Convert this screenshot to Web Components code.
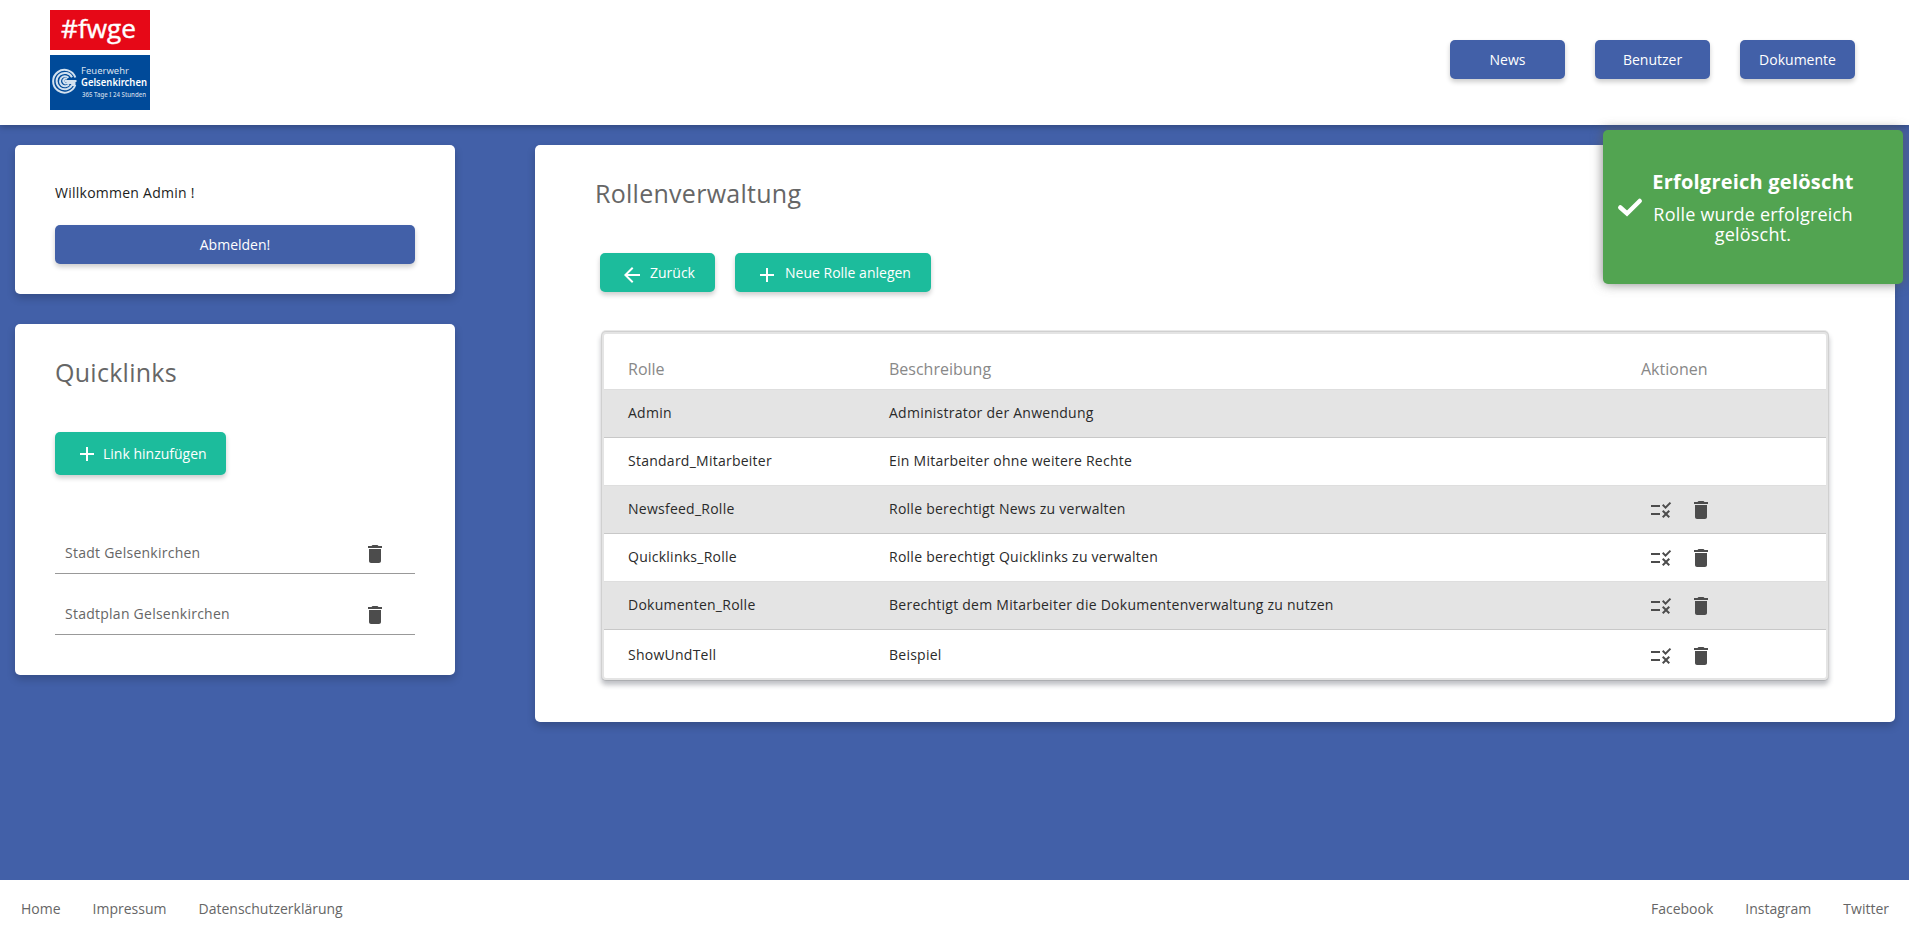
<!DOCTYPE html>
<html lang="de">
<head>
<meta charset="utf-8">
<title>Rollenverwaltung</title>
<style>
html,body{margin:0;height:100%}
body{font-family:"Open Sans",sans-serif;font-size:14px;background:#4260a8;color:#666}
</style>
</head>
<body>
<fw-app></fw-app>
<script>
const define = (name, html) => {
  const t = document.createElement('template');
  t.innerHTML = html;
  customElements.define(name, class extends HTMLElement {
    constructor() {
      super();
      this.attachShadow({ mode: 'open' }).append(t.content.cloneNode(true));
    }
  });
};

const ICONS = {
  plus: 'M19 13h-6v6h-2v-6H5v-2h6V5h2v6h6v2z',
  back: 'M20 11H7.830l5.590-5.590L12 4l-8 8 8 8 1.410-1.410L7.830 13H20v-2z',
  trash: 'M6 19c0 1.100.9 2 2 2h8c1.100 0 2-.9 2-2V7H6v12zM19 4h-3.500l-1-1h-5l-1 1H5v2h14V4z',
  rule: 'M16.540 11L13 7.460l1.410-1.410 2.120 2.120 4.240-4.240 1.410 1.410L16.540 11zM11 7H2v2h9V7zM21 13.410L19.590 12 17 14.590 14.410 12 13 13.410 15.590 16 13 18.590 14.410 20 17 17.410 19.590 20 21 18.590 18.410 16 21 13.410zM11 15H2v2h9v-2z'
};
customElements.define('fw-icon', class extends HTMLElement {
  connectedCallback() {
    if (this.shadowRoot) return;
    this.attachShadow({ mode: 'open' }).innerHTML =
      `<style>:host{display:block;flex:none;width:var(--size,24px);height:var(--size,24px)}svg{display:block;width:100%;height:100%}</style>
       <svg viewBox="0 0 24 24" fill="currentColor"><path d="${ICONS[this.getAttribute('name')]}"/></svg>`;
  }
});

define('fw-button', `<style>
:host{display:flex;box-sizing:border-box;height:39px;min-width:115px;align-items:center;justify-content:center;padding:0 20px;border-radius:5px;background:#4260a8;color:#fff;font-size:14px;font-weight:500;letter-spacing:var(--ls,0);box-shadow:0 3px 5px rgba(0,0,0,.2);white-space:nowrap}
:host([nav]){padding:0}
:host([green]){background:#1cbc9c}
</style><slot></slot>`);

define('fw-card', `<style>
:host{display:block;box-sizing:border-box;background:#fff;border-radius:5px;box-shadow:0 4px 8px rgba(0,0,0,.2)}
</style><slot></slot>`);

define('fw-logo', `<style>
:host{display:block;width:100px;height:100px}svg{display:block;overflow:visible}
text{font-family:"Open Sans",sans-serif;fill:#fff}
.s text{font-family:"Noto Sans",sans-serif}
</style>
<svg width="100" height="100" viewBox="0 0 100 100">
<rect width="100" height="40" fill="#e60817"/>
<text x="11" y="28" font-size="25" textLength="75" lengthAdjust="spacingAndGlyphs" stroke="#fff" stroke-width=".4">#fwge</text>
<rect y="45" width="100" height="55" fill="#004a99"/>
<g fill="none" stroke="#d3e1ef" stroke-width="2">
<path d="M25.300 67.500A11.400 11.400 0 1 0 25.300 75"/>
<path d="M22 67.200A8.200 8.200 0 1 0 22 75H25.500"/>
<path d="M18.500 67.700A5 5 0 1 0 19 74.300M26.500 70.900H14.500"/>
<path d="M17 68.900A2.400 2.400 0 1 0 17 73H25.500"/>
</g>
<g class="s">
<text x="31" y="64" font-size="9" textLength="48" lengthAdjust="spacingAndGlyphs" fill-opacity=".85">Feuerwehr</text>
<text x="31" y="76" font-size="10" font-weight="600" textLength="66" lengthAdjust="spacingAndGlyphs">Gelsenkirchen</text>
<text x="32" y="86.500" font-size="6.500" font-weight="500" textLength="64" lengthAdjust="spacingAndGlyphs" fill-opacity=".8">365 Tage I 24 Stunden</text>
</g>
</svg>`);

define('fw-header', `<style>
:host{display:flex;box-sizing:border-box;height:125px;background:#fff;padding:10px 54px 0 50px;justify-content:space-between;box-shadow:0 2px 6px rgba(0,0,0,.25)}
nav{display:flex;gap:30px;padding-top:30px}
</style><fw-logo></fw-logo><nav><fw-button nav>News</fw-button><fw-button nav>Benutzer</fw-button><fw-button nav>Dokumente</fw-button></nav>`);

define('fw-welcome', `<style>
:host{display:block}
fw-card{height:149px;padding:38px 40px 0}
p{margin:0 0 22px;line-height:20px;color:#1c1c1c;letter-spacing:.25px}
</style><fw-card><p>Willkommen Admin !</p><fw-button>Abmelden!</fw-button></fw-card>`);

define('fw-link', `<style>
:host{display:flex;box-sizing:border-box;height:61px;padding:28px 28px 0 10px;justify-content:space-between;border-bottom:1px solid #999;line-height:24px;letter-spacing:.25px}
fw-icon{color:#4c4c4c;margin-top:1px}
</style><slot></slot><fw-icon name="trash"></fw-icon>`);

define('fw-quicklinks', `<style>
:host{display:block}
fw-card{height:351px;padding:29px 40px 0}
h2{margin:0;font-size:25px;font-weight:400;line-height:38px;letter-spacing:.27px}
fw-button{width:171px;height:43px;margin:41px 0 38px;--ls:0;justify-content:flex-start}
fw-icon{margin:1px 4px 0 0}
</style><fw-card><h2>Quicklinks</h2><fw-button green><fw-icon name="plus"></fw-icon>Link hinzufügen</fw-button>
<fw-link>Stadt Gelsenkirchen</fw-link><fw-link>Stadtplan Gelsenkirchen</fw-link></fw-card>`);

customElements.define('fw-table', class extends HTMLElement {
  connectedCallback() {
    if (this.shadowRoot) return;
    const rows = [
      ['Admin', 'Administrator der Anwendung', 0],
      ['Standard_Mitarbeiter', 'Ein Mitarbeiter ohne weitere Rechte', 0],
      ['Newsfeed_Rolle', 'Rolle berechtigt News zu verwalten', 1],
      ['Quicklinks_Rolle', 'Rolle berechtigt Quicklinks zu verwalten', 1],
      ['Dokumenten_Rolle', 'Berechtigt dem Mitarbeiter die Dokumentenverwaltung zu nutzen', 1],
      ['ShowUndTell', 'Beispiel', 1]];
    this.attachShadow({ mode: 'open' }).innerHTML = `<style>
:host{display:block;box-sizing:border-box;border:2px solid #e4e4e4;border-radius:4px;background:#fff;box-shadow:0 0 0 1px rgba(0,0,0,.1),0 -1px 0 1px #e8e8e8,0 4px 5px 1px rgba(40,45,60,.3)}
.r{display:grid;grid-template-columns:261px 752px 1fr;box-sizing:border-box;height:48px;padding:0 0 3px 24px;align-items:center;color:#2a2a2a;letter-spacing:.25px;border-bottom:1px solid #dedede}
.r:nth-of-type(even){background:#e4e4e4;border-bottom-color:#c8c8c8}
.r.h{height:56px;padding:16px 0 1px 24px;font-size:16px;color:#888;letter-spacing:0}
.r:last-child{border-bottom:0;padding:0 0 0 24px}
.a{display:flex;gap:16px;padding:4px 0 0 8px;color:#4c4c4c}
.r:last-child .a{padding-top:3px}
</style><div class="r h"><span>Rolle</span><span>Beschreibung</span><span>Aktionen</span></div>` +
      rows.map(([n, d, a]) => `<div class="r"><span>${n}</span><span>${d}</span><span class="a">${a ? '<fw-icon name="rule"></fw-icon><fw-icon name="trash"></fw-icon>' : ''}</span></div>`).join('');
  }
});

define('fw-roles', `<style>
:host{display:block}
fw-card{height:577px;padding:29px 67px 0 60px}
h2{margin:0;font-size:25px;font-weight:400;line-height:38px;letter-spacing:.27px}
.b{display:flex;gap:20px;margin:41px 0 40px 5px}
.b fw-button{justify-content:flex-start}
fw-icon{margin:5px 6px 0 0}
fw-table{margin:0 0 0 7px}
</style><fw-card><h2>Rollenverwaltung</h2>
<div class="b"><fw-button green><fw-icon name="back"></fw-icon>Zurück</fw-button><fw-button green><fw-icon name="plus"></fw-icon>Neue Rolle anlegen</fw-button></div>
<fw-table></fw-table></fw-card>`);

define('fw-toast', `<style>
:host{position:absolute;top:130px;right:6px;width:300px;height:154px;box-sizing:border-box;border-radius:5px;background:#52a451;color:#fff;box-shadow:0 0 12px rgba(90,90,90,.75);display:flex;padding:38px 48px 0 13px;gap:7px}
svg{flex:none;width:28px;height:28px;margin-top:25px}
div{flex:1;text-align:center;font-size:18px;line-height:20px;letter-spacing:.22px}
b{display:block;font-size:20px;line-height:28px;margin-bottom:8px;white-space:nowrap}
</style><svg viewBox="0 0 28 28" fill="none" stroke="#fff" stroke-width="4.500" stroke-linecap="round" stroke-linejoin="miter"><path d="M4.300 14.500l6.700 6L23.700 8"/></svg>
<div><b>Erfolgreich gelöscht</b>Rolle wurde erfolgreich gelöscht.</div>`);

define('fw-footer', `<style>
:host{display:flex;box-sizing:border-box;height:57px;background:#fff;padding:0 20px 0 21px;justify-content:space-between;line-height:58px}
div{display:flex;gap:32px}
</style><div><span>Home</span><span>Impressum</span><span>Datenschutzerklärung</span></div><div><span>Facebook</span><span>Instagram</span><span>Twitter</span></div>`);

define('fw-app', `<style>
:host{display:flex;flex-direction:column;height:937px;position:relative;overflow:hidden}
main{flex:1;display:grid;grid-template-columns:440px 1360px;gap:80px;padding:20px 14px 0 15px;align-items:start}
aside{display:grid;gap:30px}
</style><fw-header></fw-header><main><aside><fw-welcome></fw-welcome><fw-quicklinks></fw-quicklinks></aside><fw-roles></fw-roles></main><fw-footer></fw-footer><fw-toast></fw-toast>`);
</script>
</body>
</html>
